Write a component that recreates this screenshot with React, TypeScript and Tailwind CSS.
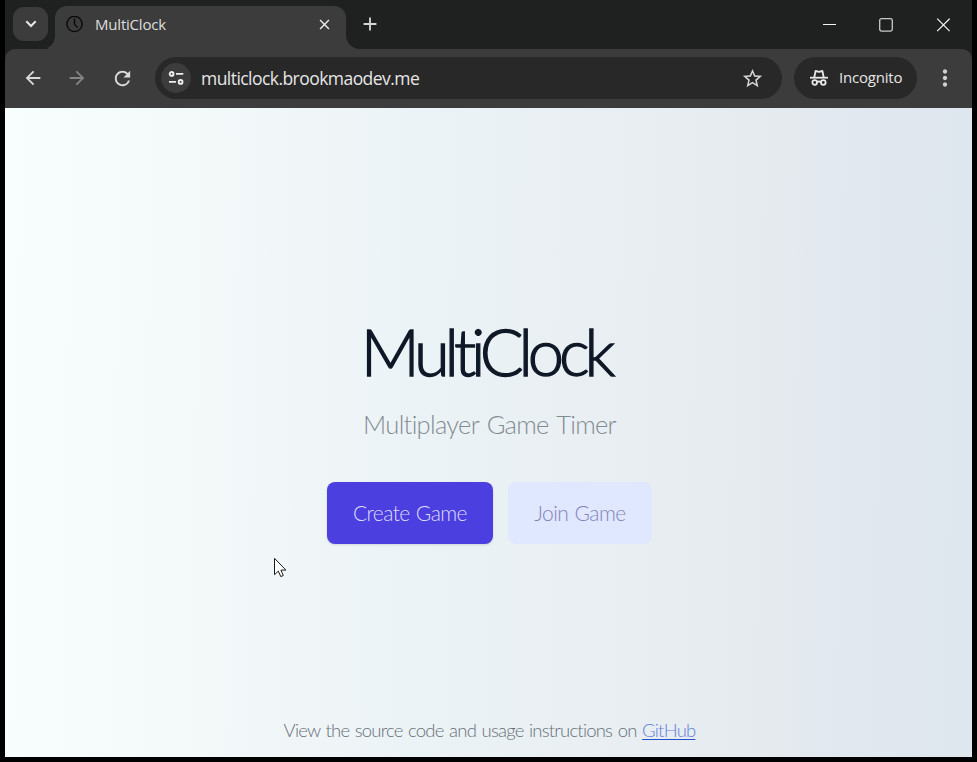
import React from "react";
import {
  MdArrowBack,
  MdArrowForward,
  MdRefresh,
  MdStarBorder,
  MdMoreVert,
  MdClose,
  MdAdd,
} from "react-icons/md";

function TabStrip() {
  return (
    <header className="flex h-[49px] bg-[#1f2120]">
      <button className="mt-[7px] ml-2 flex h-[34px] w-[35px] items-center justify-center rounded-[11px] bg-[#3c3c3c] text-[#e8e8e8]">
        <svg width="12" height="8" viewBox="0 0 12 8" fill="none" stroke="currentColor" strokeWidth="2">
          <path d="M1.3 1.3 6 6l4.700-4.700" />
        </svg>
      </button>
      <svg width="13" height="49" viewBox="0 0 13 49" className="-mr-[6px]" fill="#3c3c3c">
        <path d="M13 49H-6a13 13 0 0 0 13-13V49Z" />
      </svg>
      <div className="mt-[6px] flex h-[43px] w-[291px] items-center rounded-t-[12px] bg-[#3c3c3c] pr-[13px] pb-[6px] pl-[11px]">
        <ClockIcon />
        <span className="ml-[12px] flex-1 font-['Open_Sans','Noto_Sans',sans-serif] text-[15px] tracking-[-0.2px] text-[#dedede]">
          MultiClock
        </span>
        <MdClose className="text-[#ececec]" size={17} />
      </div>
      <svg width="14" height="49" viewBox="0 0 14 49" className="-mr-px" fill="#3c3c3c">
        <path d="M0 35a14 14 0 0 0 14 14H0Z" />
      </svg>
      <MdAdd className="mt-[13px] text-[#d4d6d5]" size={22} />
      <div className="ml-auto flex h-[49px] items-center gap-[43px] pr-[22px]">
        <svg width="14" height="14" viewBox="0 0 14 14" stroke="#f4f4f4" strokeWidth="1">
          <path d="M1 6.500h13" />
        </svg>
        <svg width="14" height="14" viewBox="0 0 14 14" fill="none" stroke="#c9c9c9" strokeWidth="1.300">
          <rect x=".7" y=".7" width="12.600" height="12.400" rx="1.800" />
        </svg>
        <svg width="14" height="14" viewBox="0 0 14 14" stroke="#f4f4f4" strokeWidth="1.200">
          <path d="m1.200.700 12.400 12.400M13.600.700 1.200 13.100" />
        </svg>
      </div>
    </header>
  );
}

function ClockIcon() {
  return (
    <svg width="17" height="17" viewBox="0 0 17 17" fill="none" stroke="#080808" strokeWidth="1.400">
      <circle cx="8.500" cy="8" r="7.600" />
      <path d="M8.500 2.500v5.600l3.100 3.500" />
    </svg>
  );
}

function SiteSettingsIcon() {
  return (
    <svg width="16" height="14" viewBox="0 0 16 14" fill="none" stroke="#ededed" strokeWidth="1.900">
      <circle cx="3.600" cy="2.900" r="1.900" />
      <path d="M8 2.900h7.300M1 10.900h7" />
      <circle cx="12.600" cy="10.900" r="1.900" />
    </svg>
  );
}

function IncognitoIcon() {
  return (
    <svg width="18" height="17" viewBox="0 0 18 17" stroke="#e8e8e8" strokeWidth="1.800" fill="none">
      <path d="M0 7.700h18" />
      <path d="M4.300 7.300 5.600 1 9 1.800l3.400-.8 1.300 6.300" strokeLinejoin="round" />
      <circle cx="4.700" cy="12.500" r="2.300" />
      <circle cx="13.300" cy="12.500" r="2.300" />
      <path d="M7 12.100q2-1.200 4 0" />
    </svg>
  );
}

function Toolbar() {
  return (
    <div className="bg-[#1f2120]">
      <div className="flex h-[59px] items-center rounded-t-[10px] bg-[#3c3c3c] pb-px pl-[17px]">
        <MdArrowBack className="text-[#dadada]" size={22} />
        <MdArrowForward className="ml-[22px] text-[#858585]" size={22} />
        <MdRefresh className="ml-[23px] text-[#dadada]" size={23} />
        <div className="ml-[21px] flex h-[42px] w-[627px] items-center rounded-full bg-[#282828] pr-[18px] pl-[6px]">
          <span className="flex size-[30px] items-center justify-center rounded-full bg-[#3c3c3c]">
            <SiteSettingsIcon />
          </span>
          <span className="ml-[10px] flex-1 pt-px font-['Open_Sans','Noto_Sans',sans-serif] text-[17.500px] tracking-[-0.55px] text-[#e6e6e6]">
            multiclock.brookmaodev.me
          </span>
          <MdStarBorder className="text-[#d6d6d6]" size={23} />
        </div>
        <div className="ml-3 flex h-[42px] w-[123px] items-center rounded-full bg-[#282828] pl-4">
          <IncognitoIcon />
          <span className="ml-[11px] pb-px font-['Open_Sans','Noto_Sans',sans-serif] text-[15px] tracking-[-0.2px] text-[#e6e6e6]">
            Incognito
          </span>
        </div>
        <MdMoreVert className="ml-[15px] text-[#cfcfcf]" size={26} />
      </div>
    </div>
  );
}

function Pointer() {
  return (
    <svg className="absolute top-[450px] left-[269px]" width="13" height="20" viewBox="0 0 13 20" fill="#fff" stroke="#1b1b1b" strokeWidth="1">
      <path d="M.5.300v16.400l3.800-3.600 2.500 5.500 2.500-1.100-2.400-5.400h5z" />
    </svg>
  );
}

export default function App() {
  return (
    <div className="h-[762px] w-[977px] overflow-hidden bg-black pr-[5px] pb-[5px] pl-[5px]">
      <TabStrip />
      <Toolbar />
      <main className="relative flex h-[649px] flex-col items-center bg-[linear-gradient(91deg,#f8fdfd_0%,#f3f8f9_22%,#ecf3f6_42%,#e8eef2_65%,#e4eaee_80%,#e1e8f0_87%,#dfe7ee_100%)] pl-[2px] font-['Lato',sans-serif] font-light">
        <h1 className="mt-[203px] mr-[8px] flex h-[80px] items-center text-[65px] leading-none tracking-[-5.100px] whitespace-nowrap text-[#0f1826] [-webkit-text-stroke:1.3px_#0f1826]">
          MultiClock
        </h1>
        <p className="mt-[18px] flex h-[32px] items-center text-[25.500px] leading-none tracking-[-0.7px] whitespace-nowrap text-[#838b92] [word-spacing:2px]">
          Multiplayer Game Timer
        </p>
        <div className="mt-[41px] flex gap-[15px]">
          <button className="h-[62px] w-[166px] rounded-lg bg-[#4b3fe0] text-[21px] tracking-[-0.55px] text-[#dedcfa] shadow-sm [word-spacing:1px]">
            Create Game
          </button>
          <button className="h-[62px] w-[144px] rounded-lg bg-[#dfe8ff] text-[21px] tracking-[-0.55px] text-[#8583b8] [word-spacing:1px]">
            Join Game
          </button>
        </div>
        <p className="mt-auto mb-[14px] flex h-[26px] items-center text-[18.500px] leading-none tracking-[-0.8px] whitespace-pre text-[#687078] [word-spacing:1.300px]">
          View the source code and usage instructions on{" "}
          <a className="text-[#6480d8] underline decoration-[#2450cf] decoration-1 underline-offset-2">GitHub</a>
        </p>
        <Pointer />
      </main>
    </div>
  );
}
